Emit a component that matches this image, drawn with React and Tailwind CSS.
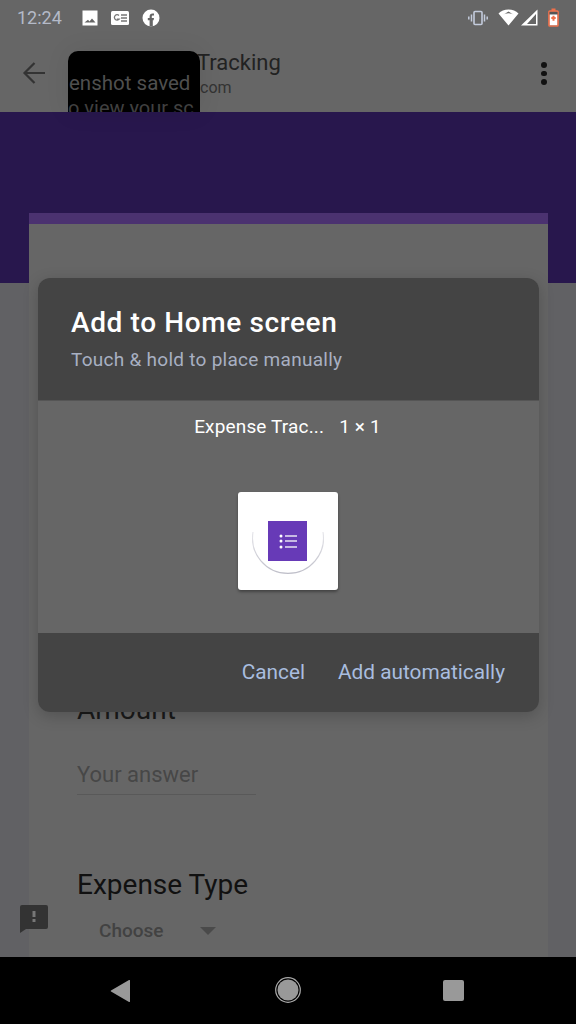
const font = { fontFamily: "Roboto, sans-serif" };

const StatusBar = () => (
  <div className="flex h-[34px] items-center justify-between pl-[17px] pr-[17px] pt-[1px]">
    <div className="flex items-center">
      <span className="w-[46px] text-[18px] leading-none text-[#b4bac8]">12:24</span>
      <svg className="ml-[18px]" width="18" height="18" viewBox="0 0 18 18">
        <path fill="#fff" fillRule="evenodd" d="M1.500 1.500h15v15h-15z M3.500 13.500h11l-3.500-4-2.500 3-1.500-1.800z" />
      </svg>
      <svg className="ml-[11px]" width="20" height="18" viewBox="0 0 20 18">
        <rect x="1" y="2" width="18" height="14" rx="1.500" fill="#fff" />
        <path d="M9 6.500a2.700 2.700 0 1 0 .2 3.600H6.800" fill="none" stroke="#777" strokeWidth="1.300" />
        <path d="M11 6h6M11 9h6M11 12h6" stroke="#777" strokeWidth="1.300" />
      </svg>
      <svg className="ml-[12px]" width="18" height="18" viewBox="0 0 18 18">
        <circle cx="9" cy="9" r="8.500" fill="#fff" />
        <path fill="#666" d="M7.600 17.500v-6.300H5.800V9h1.800V7.400c0-2 1.100-3 2.900-3 .8 0 1.500.1 1.500.1v1.900h-1c-1 0-1.200.5-1.200 1.100V9h2.200l-.4 2.200H10.800v6.300z" />
      </svg>
    </div>
    <div className="flex items-center">
      <svg width="20" height="16" viewBox="0 0 20 16" fill="none" stroke="#c3cbdc">
        <rect x="6" y="1.500" width="8" height="13" rx="1" strokeWidth="1.600" />
        <path d="M3.500 4.500v7M16.500 4.500v7M.8 6.500v3M19.200 6.500v3" strokeWidth="1.500" />
      </svg>
      <svg className="ml-[10px]" width="21" height="17" viewBox="0 0 21 17">
        <path fill="#fff" fillRule="evenodd" d="M10.500 16.500 0.500 4.500C3 2 6.500.5 10.500.5s7.500 1.500 10 4z M4.400 6.300 10.500 2.600l6.100 3.700C15 5.100 13 4.300 10.500 4.300S6 5.100 4.400 6.300z" />
      </svg>
      <svg className="ml-[2px]" width="17" height="17" viewBox="0 0 17 17">
        <path fill="#fff" fillRule="evenodd" d="M0 16.500 16.500.5v16z M15 5 6 15h9z" />
      </svg>
      <svg className="ml-[10px]" width="11" height="19" viewBox="0 0 11 19" fill="none">
        <rect x="1" y="3" width="9" height="15" rx=".8" stroke="#f0704a" strokeWidth="1.700" />
        <rect x="3.500" y="0.500" width="4" height="2.500" fill="#f0704a" />
        <rect x="1.500" y="4" width="8" height="2.500" fill="#555" />
        <rect x="1.800" y="6.500" width="7.400" height="10.700" fill="#fff" />
        <path d="M5.500 7.800v5M3.300 10h4.400" stroke="#f0704a" strokeWidth="2" />
      </svg>
    </div>
  </div>
);

const AppHeader = () => (
  <div className="relative h-[78px] bg-[#666666]">
    <svg className="absolute left-[22px] top-[27px]" width="24" height="24" viewBox="0 0 24 24" fill="none" stroke="#333" strokeWidth="2.200">
      <path d="M23 12H3M12.500 2 2.500 12l10 10" />
    </svg>
    <div className="absolute left-[197px] top-[14px] text-[22px] leading-[30px] text-[#222]">Tracking</div>
    <div className="absolute left-[200px] top-[44px] text-[16px] leading-[20px] text-[#333]">com</div>
    <div className="absolute left-[541px] top-[28px] flex flex-col gap-[3px]">
      <span className="h-[5.500px] w-[5.500px] rounded-full bg-[#111]" />
      <span className="h-[5.500px] w-[5.500px] rounded-full bg-[#111]" />
      <span className="h-[5.500px] w-[5.500px] rounded-full bg-[#111]" />
    </div>
  </div>
);

// form behind the dialog
const FormCard = () => (
  <div className="relative z-10 ml-[29px] -mt-[70px] flex h-[744px] w-[519px] flex-col bg-[#666666]">
    <div className="h-[11px] bg-[#4b3270]" />
    <div className="flex flex-1 flex-col pl-[48px] pt-[470px]">
      <div className="text-[28px] leading-[32px] text-[#1a1a1a]">Amount</div>
      <div className="mt-[35px] w-[179px] border-b border-[#595959] pb-[5px] text-[22px] leading-[28px] text-[#474747]">Your answer</div>
      <div className="mt-[73px] text-[28px] leading-[34px] text-[#111]">Expense Type</div>
      <div className="mt-[17px] flex items-center pl-[22px]">
        <span className="text-[19px] font-medium leading-[24px] text-[#424242]">Choose</span>
        <span className="ml-[37px] h-0 w-0 border-x-[8px] border-t-[8px] border-x-transparent border-t-[#4a4a4a]" />
      </div>
    </div>
  </div>
);

const Toast = () => (
  <div className="absolute left-[68px] top-[51px] h-[61px] w-[132px] overflow-hidden rounded-t-[10px] bg-black shadow-[0_0_24px_rgba(0,0,0,0.08)]">
    <div className="absolute left-[1px] top-[20px] whitespace-nowrap text-[20.500px] leading-[24px] text-[#4f4f4f]">enshot saved</div>
    <div className="absolute left-0 top-[45px] whitespace-nowrap text-[20px] leading-[24px] text-[#404040]">o view your sc</div>
  </div>
);

const Dialog = () => (
  <div className="absolute left-[38px] top-[278px] z-20 w-[501px] overflow-hidden rounded-[12px] bg-[#666666] shadow-[0_4px_16px_rgba(0,0,0,0.2)]">
    <div className="h-[122px] bg-[#444444] pl-[33px] pt-[28px]">
      <div className="text-[28px] font-medium leading-[34px] tracking-[0.62px] text-white">Add to Home screen</div>
      <div className="mt-[8px] text-[19px] leading-[24px] tracking-[0.27px] text-[#a8b0c2]">Touch &amp; hold to place manually</div>
    </div>
    <div className="h-[233px] border-t border-[#555]">
      <div className="flex justify-center gap-[15px] pr-[2px] pt-[14px] text-[19px] leading-[24px] tracking-[0.15px] text-white">
        <span>Expense Trac...</span>
        <span>1 × 1</span>
      </div>
      <div className="ml-[200px] mt-[53px] flex h-[98px] w-[100px] items-center justify-center rounded-[3px] bg-white shadow-[0_2px_3px_rgba(0,0,0,0.35)]">
        <div className="relative h-[72px] w-[72px]">
          <svg className="absolute inset-0" width="72" height="72" viewBox="0 0 72 72" fill="none">
            <defs>
              <linearGradient id="arcFade" x1="0" y1="26" x2="0" y2="74" gradientUnits="userSpaceOnUse">
                <stop offset="0" stopColor="#e8e8ec" />
                <stop offset="1" stopColor="#b9b9c4" />
              </linearGradient>
            </defs>
            <path d="M1 27a35.500 35.500 0 1 0 70 0" stroke="url(#arcFade)" strokeWidth="1.200" />
          </svg>
          <div className="absolute left-[16px] top-[16px] flex h-[40px] w-[39px] items-center justify-center bg-[#673ab7]">
            <svg width="20" height="16" viewBox="0 0 20 16">
              <circle cx="3" cy="3" r="1.500" fill="#fff" />
              <circle cx="3" cy="8" r="1.500" fill="#fff" />
              <circle cx="3" cy="14" r="1.500" fill="#fff" />
              <path d="M7 3h12M7 8h12M7 14h12" stroke="#e8e4f2" strokeWidth="1.600" />
            </svg>
          </div>
        </div>
      </div>
    </div>
    <div className="flex h-[79px] items-center justify-end gap-[33px] bg-[#444444] pr-[34px] text-[20.800px] text-[#a9bddf]">
      <span>Cancel</span>
      <span>Add automatically</span>
    </div>
  </div>
);

const NavBar = () => (
  <div className="relative z-30 flex h-[67px] items-center justify-center bg-black">
    <svg className="absolute left-[110px] top-[22px]" width="21" height="24" viewBox="0 0 21 24">
      <path fill="#999" d="M20 1.500v21a.6.6 0 0 1-1 .4L1 12.500a.6.6 0 0 1 0-1L19 1.100a.6.6 0 0 1 1 .4z" />
    </svg>
    <svg className="absolute left-[275px] top-[20px]" width="26" height="26" viewBox="0 0 26 26">
      <circle cx="13" cy="13" r="12.300" fill="none" stroke="#aaa" strokeWidth="1.200" />
      <circle cx="13" cy="13" r="10.500" fill="#999" />
    </svg>
    <div className="absolute left-[443px] top-[23px] h-[21px] w-[21px] rounded-[2px] bg-[#999]" />
  </div>
);

const App = () => {
  return (
    <div className="relative flex h-[1024px] w-[576px] flex-col overflow-hidden bg-[#616164]" style={font}>
      <div className="bg-[#666666]">
        <StatusBar />
        <AppHeader />
      </div>
      <div className="h-[171px] shrink-0 bg-[#28174d]" />
      <div className="min-h-0 flex-1">
        <FormCard />
      </div>
      <NavBar />
      <Toast />
      <Dialog />
      <svg className="absolute left-[20px] top-[905px] z-10" width="28" height="28" viewBox="0 0 28 28">
        <path fill="#333" d="M2 0h24a2 2 0 0 1 2 2v20a2 2 0 0 1-2 2H6l-6 4V2a2 2 0 0 1 2-2z" />
        <rect x="12.500" y="6" width="3" height="6" fill="#777" />
        <rect x="12.500" y="14" width="3" height="3" fill="#777" />
      </svg>
    </div>
  );
};

export default App;
